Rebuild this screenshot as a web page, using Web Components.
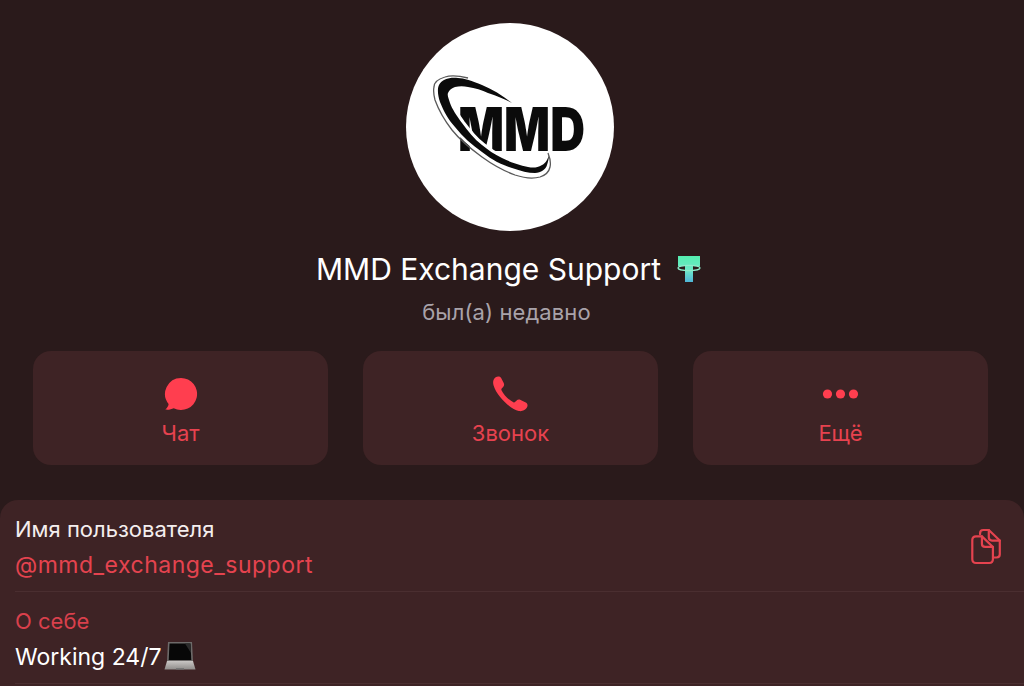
<!DOCTYPE html>
<html lang="ru"><head><meta charset="utf-8"><title>MMD Exchange Support</title>
<style>
html,body{margin:0;padding:0;background:#2a1a1b;height:686px;overflow:hidden}
body{font-family:Inter,"Liberation Sans",sans-serif;color:#fff}
</style></head><body>
<profile-page>
  <profile-avatar></profile-avatar>
  <profile-name>MMD Exchange Support</profile-name>
  <profile-status>был(а) недавно</profile-status>
  <action-row>
    <action-button icon="chat">Чат</action-button>
    <action-button icon="phone">Звонок</action-button>
    <action-button icon="more">Ещё</action-button>
  </action-row>
  <info-panel>
    <info-row label="Имя пользователя" tone="plain" copy><span class="link">@mmd_exchange_support</span></info-row>
    <info-row label="О себе" tone="accent" laptop>Working 24/7</info-row>
  </info-panel>
</profile-page>
<script>
function def(name, html){
  customElements.define(name, class extends HTMLElement{
    constructor(){super();this.attachShadow({mode:'open'}).innerHTML=typeof html==='function'?html(this):html;}
  });
}
def('profile-page',`<style>:host{display:flex;flex-direction:column;align-items:stretch;height:686px;overflow:hidden;padding-top:23px;box-sizing:border-box}</style><slot></slot>`);

const CRESCENT="M106 80C96 72 86 66 76 62C66 58 58 55 52 55C44 54 36 56 33 62C31 66 32 73 34 79C38 89 42 96 49 104C57 114 66 122 76 129C86 137 96 142 106 145C115 148 122 150 129 150C135 150 140 146 141 142C142 139 143 135 143 132C142 136 139 141 136 142C131 145 127 145 122 144C113 142 104 139 96 135C88 131 82 127 76 122C68 116 62 108 56 100C51 93 46 86 44 80C43 76 41 73 42 70C43 67 46 65 49 64C53 63 58 63 62 64C69 65 76 67 82 70C91 73 99 76 106 80Z";

def('profile-avatar',`<style>:host{display:block;width:208px;height:208px;margin:0 0 0 406px;border-radius:50%;background:#fff}svg{display:block;filter:blur(.35px)}text{font-family:Inter,"Liberation Sans",sans-serif;font-weight:900}</style>
<svg width="208" height="208" viewBox="0 0 208 208">
  <text transform="translate(52 128) scale(1 1.22)" font-size="50" textLength="127" lengthAdjust="spacingAndGlyphs" fill="#0b0b0b">MMD</text>
  <path d="${CRESCENT}" fill="#fff" stroke="#fff" stroke-width="6"/>
  <path d="${CRESCENT}" fill="#0b0b0b"/>
  <path d="M62 55C54 53 45 52 39 54C32 56 28 60 28 64C27 68 28 73 29 77C33 88 39 98 46 107C54 117 65 126 76 134C87 142 98 148 109 152C118 155 127 156 134 154C140 152 143 149 144 144C145 140 144 135 142 130" fill="none" stroke="#5a5a5a" stroke-width="1.300"/>
</svg>`);

def('profile-name',`<style>:host{display:flex;justify-content:center;align-items:center;margin-top:18px;height:40px;padding-right:6px;font:400 30px/40px Inter,"Liberation Sans",sans-serif;color:#fff}
svg{margin-left:15px;margin-top:-1px;display:block;filter:blur(.4px)}</style><slot></slot>
<svg width="26" height="30" viewBox="0 0 26 30"><defs><linearGradient id="g" x1="0" y1="0" x2="0" y2="1"><stop offset="0" stop-color="#55eeb0"/><stop offset=".55" stop-color="#6fe8c8"/><stop offset="1" stop-color="#4fb6d8"/></linearGradient></defs>
<path d="M2 2H24V12H17V28H9V12H2Z" fill="url(#g)"/><ellipse cx="13" cy="14" rx="11" ry="2.600" fill="none" stroke="#8deccb" stroke-width="1.300"/></svg>`);

def('profile-status',`<style>:host{display:block;text-align:center;margin-top:10px;padding-right:11px;font:400 22px/26px Inter,"Liberation Sans",sans-serif;letter-spacing:.1px;color:#a9a3aa}</style><slot></slot>`);

def('action-row',`<style>:host{display:grid;grid-template-columns:repeat(3,295px);column-gap:35px;justify-content:center;margin-top:26px;padding-right:3px}</style><slot></slot>`);

const ICONS={
 chat:`<svg width="34" height="34" viewBox="0 0 34 34"><path d="M17 1A16 16 0 1 1 9.700 31.200C7.500 32.300 4.600 33 1.300 32.600C3.400 31 4.400 28.800 4.600 27A16 16 0 0 1 17 1Z" fill="#ff3e4f"/></svg>`,
 phone:`<svg width="38" height="38" viewBox="0 0 38 38"><path d="M3.300 2.500C5.400 1 7.800 1 9 2.800L11.600 7.800C12.500 9.600 12.200 11 10.900 12.300L9.700 13.600C9.300 14 9.200 14.600 9.500 15.200C11.500 19.600 16.600 24.900 21.400 27.300C22 27.600 22.600 27.500 23 27.100L24.400 25.700C25.600 24.500 27.100 24.300 28.600 25L33.800 27.600C35.900 28.700 36 31.100 34.600 33.100C32.900 35.500 30 36.600 26.800 36C18.500 34.400 4.700 21.200 1.600 10.600C.6 7.200 1.200 4.200 3.300 2.500Z" fill="#ff3e4f"/></svg>`,
 more:`<svg width="38" height="34" viewBox="0 0 38 34"><g fill="#ff3e4f"><circle cx="5.500" cy="17" r="4.600"/><circle cx="18.500" cy="17" r="4.600"/><circle cx="31.500" cy="17" r="4.600"/></g></svg>`
};
def('action-button',el=>`<style>:host{display:flex;flex-direction:column;align-items:center;height:114px;box-sizing:border-box;padding-top:26px;border-radius:18px;background:#3e2325;color:#e7424f;font:400 22px/26px Inter,"Liberation Sans",sans-serif}
.i{height:34px;display:flex;align-items:center;justify-content:center}.i svg{display:block}.t{margin-top:9px}</style>
<div class="i">${ICONS[el.getAttribute('icon')]}</div><div class="t"><slot></slot></div>`);

def('info-panel',`<style>:host{display:block;margin-top:35px;background:#3e2325;border-radius:18px 18px 0 0;flex:1;padding-left:15px}</style><slot></slot>`);

const COPY=`<svg class="copy" width="33" height="37" viewBox="0 0 36 40" fill="none" stroke="#e5434f" stroke-width="2.400" stroke-linejoin="round" stroke-linecap="round"><path d="M11 6.500V5.500C11 3.500 12.500 2 14.500 2H20.500L32.500 13.500V28.500C32.500 30.500 31 32 29 32H25.500"/><path d="M20.500 2V10C20.500 12 22 13.500 24 13.500H32.500"/><path d="M6.500 9H13L25 20.500V34C25 36.500 23.500 38 21 38H6.500C4 38 2.500 36.500 2.500 34V13C2.500 10.500 4 9 6.500 9Z"/><path d="M13 9V17C13 19 14.500 20.500 16.500 20.500H25"/></svg>`;
const LAPTOP=`<svg class="lap" width="32" height="30" viewBox="0 0 32 30"><defs><linearGradient id="b" x1="0" y1="0" x2="0" y2="1"><stop offset="0" stop-color="#c9c6c4"/><stop offset="1" stop-color="#8f8c8a"/></linearGradient></defs><path d="M4 1H28L29 20H3Z" fill="#6d6a69"/><path d="M5.500 2.500H26.500L27.300 19H4.700Z" fill="#070707"/><path d="M21 2.500H26.500L27 12Z" fill="#2b2b2b"/><path d="M3 20H29L31.500 28.500H.5Z" fill="url(#b)"/><path d="M12 27H20V28.500H12Z" fill="#777"/></svg>`;
def('info-row',el=>`<style>:host{display:flex;align-items:center;justify-content:space-between;height:92px;box-sizing:border-box;padding:2px 21px 0 0;border-bottom:1px solid #4a2e30;font:400 22px/36px Inter,"Liberation Sans",sans-serif}
.l{color:${el.getAttribute('tone')==='accent'?'#d9404c':'#f4eeee'}}.v{display:flex;align-items:center;color:#fff;font-size:23px}
.copy{display:block}.lap{display:block;margin:-1px 0 0 2px}::slotted(.link){color:#e5434f;letter-spacing:.5px}</style>
<div><div class="l">${el.getAttribute('label')}</div><div class="v"><slot></slot>${el.hasAttribute('laptop')?LAPTOP:''}</div></div>${el.hasAttribute('copy')?COPY:''}`);
</script>
</body></html>
